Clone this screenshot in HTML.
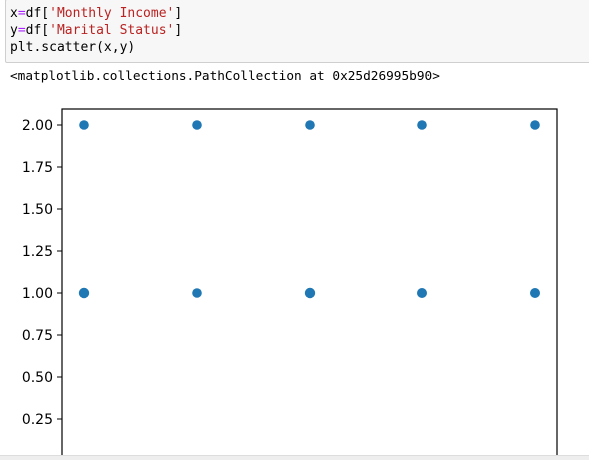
<!DOCTYPE html>
<html><head><style>
body{margin:0;width:589px;height:459px;background:#fff;overflow:hidden;position:relative;font-family:"DejaVu Sans Mono","Liberation Mono",monospace}
.cell{position:absolute;left:5px;top:-1px;width:590px;height:62px;background:#f7f7f7;border:1px solid #cfcfcf;border-radius:2px}
.code{position:absolute;left:10px;top:5px;font-size:13px;line-height:17px;color:#000;white-space:pre}
.s{color:#ba2121}.o{color:#aa22ff}
.out{position:absolute;left:10px;top:69px;font-size:12.75px;color:#000;white-space:pre}
.bot{position:absolute;left:0;top:455px;width:589px;height:4px;background:#eee;border-top:1px solid #ddd}
</style></head><body>
<div class="cell"></div>
<div class="code">x<span class="o">=</span>df[<span class="s">'Monthly Income'</span>]
y<span class="o">=</span>df[<span class="s">'Marital Status'</span>]
plt.scatter(x,y)</div>
<div class="out">&lt;matplotlib.collections.PathCollection at 0x25d26995b90&gt;</div>
<svg width="589" height="459" style="position:absolute;left:0;top:0" font-family="DejaVu Sans, Liberation Sans, sans-serif" font-size="14">
<rect x="62" y="109" width="495" height="360" fill="none" stroke="#000" stroke-width="1.2"/>
<g stroke="#000" stroke-width="1">
<line x1="57" x2="62" y1="125" y2="125"/><line x1="57" x2="62" y1="167" y2="167"/><line x1="57" x2="62" y1="209" y2="209"/><line x1="57" x2="62" y1="251" y2="251"/><line x1="57" x2="62" y1="293" y2="293"/><line x1="57" x2="62" y1="335" y2="335"/><line x1="57" x2="62" y1="377" y2="377"/><line x1="57" x2="62" y1="419" y2="419"/>
</g>
<g text-anchor="end" fill="#000">
<text x="53" y="130">2.00</text><text x="53" y="172">1.75</text><text x="53" y="214">1.50</text><text x="53" y="256">1.25</text><text x="53" y="298">1.00</text><text x="53" y="340">0.75</text><text x="53" y="382">0.50</text><text x="53" y="424">0.25</text>
</g>
<g fill="#1f77b4">
<circle cx="84" cy="125" r="4.8"/><circle cx="197" cy="125" r="4.8"/><circle cx="310" cy="125" r="4.8"/><circle cx="422" cy="125" r="4.8"/><circle cx="535" cy="125" r="4.8"/>
<circle cx="84" cy="293" r="5.2"/><circle cx="197" cy="293" r="4.8"/><circle cx="310" cy="293" r="5.2"/><circle cx="422" cy="293" r="5"/><circle cx="535" cy="293" r="5"/>
</g>
</svg>
<div class="bot"></div>
</body></html>
